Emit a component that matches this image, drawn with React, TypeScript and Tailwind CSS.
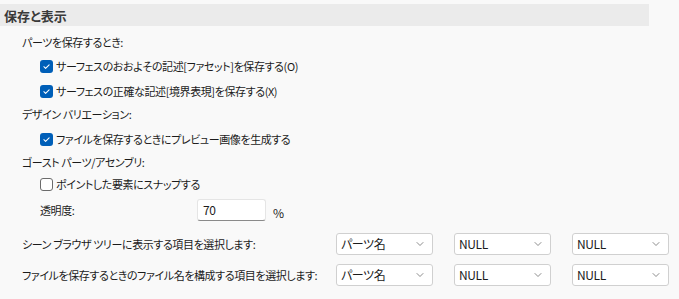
import { ChevronDown } from 'lucide-react';

const font = "[font-family:'Noto_Sans_CJK_JP',sans-serif] [font-feature-settings:'palt']";

const Check = ({ checked }: { checked: boolean }) =>
  checked ? (
    <span className="flex h-[13px] w-[13px] shrink-0 items-center justify-center rounded-[3px] bg-[#005fb8]">
      <svg viewBox="0 0 12 12" className="h-[9px] w-[9px]" fill="none" stroke="white" strokeWidth="1.4" strokeLinecap="round" strokeLinejoin="round">
        <path d="M2.5 6.3l2.3 2.2L9.5 3.8" />
      </svg>
    </span>
  ) : (
    <span className="h-[13px] w-[13px] shrink-0 rounded-[3px] border border-[#6b6b6b] bg-white" />
  );

const CheckRow = ({ checked, label, mt }: { checked: boolean; label: string; mt: string }) => (
  <div className={`flex h-[20px] items-center gap-[3px] pl-[40px] ${mt}`}>
    <Check checked={checked} />
    <span>{label}</span>
  </div>
);

const Select = ({ value }: { value: string }) => (
  <div className="flex h-[22px] w-[97px] items-center justify-between rounded-[3px] border border-[#d0d0d0] bg-white pl-[4px] pr-[6px]">
    <span className="text-[12px]">{value}</span>
    <ChevronDown className="h-[12px] w-[12px] text-[#666]" strokeWidth={1.5} />
  </div>
);

const SelectRow = ({ label, first, mt }: { label: string; first: string; mt: string }) => (
  <div className={`flex h-[22px] items-center ${mt}`}>
    <span className="w-[336px] pl-[22px]">{label}</span>
    <div className="flex gap-[21px]">
      <Select value={first} />
      <Select value="NULL" />
      <Select value="NULL" />
    </div>
  </div>
);

export default function App() {
  return (
    <div className={`h-[299px] w-[679px] overflow-hidden whitespace-nowrap bg-[#f9f9f9] pt-[4px] text-[11px] leading-none tracking-[-0.4px] text-[#1b1b1b] ${font}`}>
      <div className="flex h-[22px] w-[649px] items-center bg-[#ebebeb] pl-[4px] text-[13px] font-bold tracking-normal text-[#3a3a3a]">
        保存と表示
      </div>

      <div className="mt-[6px] flex h-[20px] items-center pl-[22px]">パーツを保存するとき:</div>
      <CheckRow checked label="サーフェスのおおよその記述[ファセット]を保存する(O)" mt="mt-[4px]" />
      <CheckRow checked label="サーフェスの正確な記述[境界表現]を保存する(X)" mt="mt-[5px]" />

      <div className="mt-[3px] flex h-[20px] items-center pl-[22px]">デザイン バリエーション:</div>
      <CheckRow checked label="ファイルを保存するときにプレビュー画像を生成する" mt="mt-[5px]" />

      <div className="mt-[3px] flex h-[20px] items-center pl-[22px]">ゴースト パーツ/アセンブリ:</div>
      <CheckRow checked={false} label="ポイントした要素にスナップする" mt="mt-[2px]" />

      <div className="mt-[5px] flex h-[22px] items-center pl-[40px]">
        <span className="w-[157px]">透明度:</span>
        <div className="flex h-[22px] w-[69px] items-center rounded-[3px] border border-[#e5e5e5] border-b-[#8a8a8a] bg-white pl-[5px] text-[12px]">
          70
        </div>
        <span className="ml-[7px] mt-[6px] text-[12px]">%</span>
      </div>

      <SelectRow label="シーン ブラウザ ツリーに表示する項目を選択します:" first="パーツ名" mt="mt-[12px]" />
      <SelectRow label="ファイルを保存するときのファイル名を構成する項目を選択します:" first="パーツ名" mt="mt-[9px]" />
    </div>
  );
}
